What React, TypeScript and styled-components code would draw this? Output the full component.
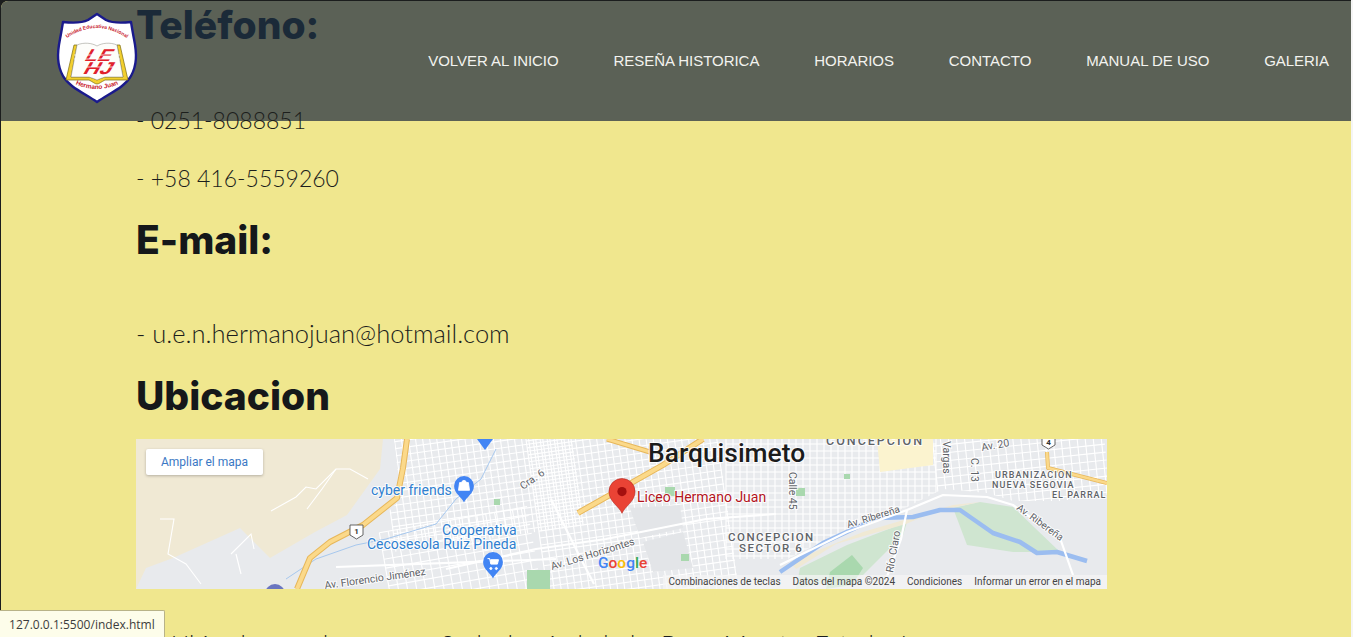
import React from "react";
import styled, { createGlobalStyle } from "styled-components";

const Global = createGlobalStyle`
  html, body { margin: 0; padding: 0; height: 100%; background: #f5f5f5; overflow: hidden; }
  #root { height: 100%; }
`;

const Frame = styled.div`
  width: 1351px;
  height: 637px;
  box-sizing: border-box;
  padding: 1px 0 0 1px;
  background: #1b1d1d;
  overflow: hidden;
`;

const Page = styled.div`
  height: 636px;
  display: grid;
  grid-template-columns: 100%;
  grid-template-rows: 120px 1fr;
  background: #f0e78e;
  border-top-left-radius: 7px;
  overflow: hidden;
`;

const Header = styled.header`
  grid-area: 1 / 1 / 2 / 2;
  display: flex;
  align-items: center;
  justify-content: space-between;
  background: #5b6156;
  padding: 0 22px 0 55px;
`;

const LogoBox = styled.div`
  display: flex;
  margin-top: -6px;
`;

const Nav = styled.nav`
  display: flex;
  gap: 54.8px;
`;

const NavLink = styled.a`
  font-family: "Liberation Sans", Arial, sans-serif;
  font-size: 15px;
  letter-spacing: -0.03px;
  color: #f3f3ef;
  white-space: nowrap;
  position: relative;
  top: -1px;
`;

const Content = styled.main`
  grid-area: 1 / 1 / 3 / 2;
  z-index: 1;
  pointer-events: none;
  padding: 0 243px 0 135px;
  min-width: 0;
`;

const Heading = styled.h2<{ $navy?: boolean; $gap: number }>`
  font-family: Inter, Lato, sans-serif;
  font-weight: 800;
  font-size: 39px;
  line-height: 48px;
  margin: 0 0 ${(p) => p.$gap}px;
  color: ${(p) => (p.$navy ? "#1b2a38" : "#15181a")};
`;

const Line = styled.p<{ $size: number; $after: number }>`
  font-family: Lato, "Open Sans", sans-serif;
  font-weight: 300;
  font-size: ${(p) => p.$size}px;
  line-height: 28px;
  margin: 0 0 ${(p) => p.$after}px;
  color: #1c1e1c;
  white-space: nowrap;
`;

const MapBox = styled.div`
  position: relative;
  width: 971px;
  height: 150px;
  overflow: hidden;
  background: #e8eaed;
  pointer-events: auto;
`;

const MapSvg = styled.svg`
  display: block;
  width: 971px;
  height: 150px;
`;

const ExpandButton = styled.button`
  position: absolute;
  left: 10px;
  top: 10px;
  width: 117px;
  height: 26px;
  padding: 0;
  border: 0;
  border-radius: 2px;
  background: #fff;
  box-shadow: 0 1px 3px rgba(0, 0, 0, 0.25);
  color: #3a78c4;
  font-family: Roboto, sans-serif;
  font-size: 12px;
`;

const Attribution = styled.div`
  position: absolute;
  right: 0;
  bottom: 0;
  height: 14px;
  display: flex;
  background: rgba(245, 245, 245, 0.72);
  font-family: Roboto, sans-serif;
  font-size: 10px;
  line-height: 14px;
  color: #444;
`;

const AttributionItem = styled.span`
  padding: 0 6px;
  white-space: nowrap;
`;

const CutLine = styled.p`
  font-family: Lato, "Open Sans", sans-serif;
  font-weight: 300;
  font-size: 25px;
  line-height: 28px;
  margin: 41px 0 0 35px;
  color: #1c1e1c;
  white-space: nowrap;
  word-spacing: 6px;
`;

const StatusBubble = styled.div`
  position: fixed;
  left: 0;
  bottom: 0;
  width: 165px;
  height: 27px;
  box-sizing: border-box;
  padding: 0 0 0 9px;
  background: #fdfdea;
  border-top: 1px solid #b8b388;
  border-right: 1px solid #b8b388;
  border-top-right-radius: 2px;
  z-index: 5;
  font-family: "Open Sans", "Liberation Sans", sans-serif;
  font-size: 12px;
  line-height: 27px;
  letter-spacing: 0.02px;
  color: #3c3c3c;
  white-space: nowrap;
`;

const Logo = () => (
  <svg width="82" height="92" viewBox="0 0 82 92" aria-label="Unidad Educativa Nacional Hermano Juan">
    <defs>
      <path id="arcTop" d="M7 29 Q40 3 75 29" fill="none" />
      <path id="arcBottom" d="M15 70 Q41 84 67 70" fill="none" />
      <clipPath id="lettersClip">
        <rect x="12" y="28" width="60" height="44" />
      </clipPath>
    </defs>
    <path
      d="M41 2 L50 8 C56 11 66 11 75 10 C76 16 77 22 78 27 C81 42 81 53 75 64 C69 75 54 81 41 90 C28 81 13 75 7 64 C1 53 1 42 4 27 C5 22 6 16 7 10 C16 11 26 11 32 8 Z"
      fill="#fff"
      stroke="#1a1a8c"
      strokeWidth="2.4"
      strokeLinejoin="round"
    />
    <text fontFamily="Liberation Sans, sans-serif" fontSize="5" fontWeight="700" fill="#c8202c">
      <textPath href="#arcTop" startOffset="50%" textAnchor="middle">Unidad Educativa Nacional</textPath>
    </text>
    <text fontFamily="Liberation Sans, sans-serif" fontSize="6.4" fontWeight="700" fill="#c8202c">
      <textPath href="#arcBottom" startOffset="50%" textAnchor="middle">Hermano Juan</textPath>
    </text>
    <path d="M18 33 L10 68 L33 68 C37 70 39 72 41 72 C43 72 45 70 49 68 L72 68 L64 33 L61 33 L67 65 L49 65 C46 66 43 67 41 68 C39 67 36 66 33 65 L15 65 L21 33 Z" fill="#f2cf2e" stroke="#7a6a10" strokeWidth="0.7" />
    <path d="M21 33 C28 30 36 31 41 34 C46 31 54 30 61 33 L67 65 L49 65 C46 66 43 67 41 68 C39 67 36 66 33 65 L15 65 Z" fill="#fdfdfa" stroke="#8a8a80" strokeWidth="0.5" />
    <g clipPath="url(#lettersClip)">
      <g transform="translate(41 50) skewX(-30)" fill="#e0202c" fontFamily="Liberation Sans, sans-serif" fontWeight="700" textAnchor="middle">
        <text x="-1" y="-1" fontSize="17" textLength="26" lengthAdjust="spacingAndGlyphs">LE</text>
        <text x="6" y="12" fontSize="17" textLength="28" lengthAdjust="spacingAndGlyphs">HJ</text>
      </g>
      <g stroke="#fdfdfa" strokeWidth="0.8">
        <line x1="18" x2="64" y1="43" y2="43" />
        <line x1="18" x2="64" y1="47" y2="47" />
        <line x1="18" x2="64" y1="55" y2="55" />
      </g>
    </g>
  </svg>
);

const streets = (x: number, y: number, w: number, h: number, step: number, rot: number) => {
  const rows: React.ReactElement[] = [];
  for (let i = 0; i <= h; i += step) rows.push(<line key={`h${i}`} x1={x} x2={x + w} y1={y + i} y2={y + i} />);
  for (let i = 0; i <= w; i += step) rows.push(<line key={`v${i}`} x1={x + i} x2={x + i} y1={y} y2={y + h} />);
  return (
    <g transform={`rotate(${rot} ${x + w / 2} ${y + h / 2})`} stroke="#fff" strokeWidth="1.1">
      {rows}
    </g>
  );
};

const Pin = ({ x, y, color, s = 1, glyph }: { x: number; y: number; color: string; s?: number; glyph?: React.ReactNode }) => (
  <g transform={`translate(${x} ${y}) scale(${s})`}>
    <path d="M0 14 C-2 9 -9 6 -9 -1 A9 9 0 1 1 9 -1 C9 6 2 9 0 14 Z" fill={color} />
    {glyph}
  </g>
);

const MapLabel = styled.text<{ $c?: string; $s?: number; $w?: number; $ls?: number }>`
  font-family: Roboto, sans-serif;
  font-size: ${(p) => p.$s ?? 10}px;
  font-weight: ${(p) => p.$w ?? 400};
  letter-spacing: ${(p) => p.$ls ?? 0}px;
  fill: ${(p) => p.$c ?? "#5f6368"};
  paint-order: stroke;
  stroke: rgba(255, 255, 255, 0.85);
  stroke-width: 2px;
`;

const HWY = "M161 150 L174 119 L194 103 L227 86 L261 59 L267 29 L271 0";

const MapDrawing = () => (
  <MapSvg viewBox="0 0 971 150">
    <rect width="971" height="150" fill="#e8eaed" />
    <path d="M0 0 H247 L244 30 L211 76 L179 93 L134 119 L104 89 L37 119 L10 129 L0 150 Z" fill="#f0e9d4" />
    <clipPath id="cityA"><path d="M258 0 H971 V56 L924 62 L877 62 L851 54 L807 50 L771 68 L711 90 L644 124 L610 150 H195 L235 90 L265 60 Z" /></clipPath>
    <g clipPath="url(#cityA)">
      {streets(250, -30, 190, 130, 7, -8)}
      {streets(400, -40, 190, 210, 7, -8)}
      {streets(590, -30, 210, 150, 7, 0)}
      {streets(800, -10, 171, 80, 8, -6)}
      {streets(250, 80, 150, 90, 9, -10)}
    </g>
    <path d="M494 69 L544 66 L547 89 L504 99 Z M507 103 L547 93 L557 129 L517 133 Z" fill="#e3e5e8" />
    <path d="M741 0 H797 V26 L744 33 Z" fill="#fbf3cf" />
    <path d="M817 69 L844 63 L877 68 L924 113 L877 113 L831 106 Z" fill="#cfe5d0" />
    <path d="M664 129 L711 106 L771 83 L767 96 L727 136 L660 150 Z" fill="#cfe5d0" />
    <path d="M654 123 L727 93 L771 80 L817 66 L844 63 L800 72 L770 85 L700 105 L660 130 Z" fill="#f0e9d4" />
    <path d="M694 133 L716 116 L727 129 L716 146 L690 150 Z" fill="#a9d8ae" />
    <path d="M391 131 H414 V150 H391 Z" fill="#a9d8ae" />
    <path d="M529 48 h10 v9 h-10 Z M660 49 h9 v8 h-9 Z M708 35 h6 v5 h-6 Z M358 60 h6 v6 h-6 Z M517 57 h8 v6 h-8 Z M545 115 h8 v7 h-8 Z" fill="#a9d8ae" />
    <g stroke="#fff" strokeWidth="1.1" fill="none">
      <path d="M135 72 L160 58 L170 48 L180 50 L200 30 L214 30 L232 40" />
      <path d="M171 70 L186 50 L200 30" />
      <path d="M24 80 L38 80 L32 115 L50 125 L65 145" />
      <path d="M95 115 L115 95 L118 110" />
      <path d="M105 135 L100 115" />
    </g>
    <path d="M150 140 L180 120 L220 106 L250 100 L300 85 L320 60 L345 40 L360 10" stroke="#a7c8ee" strokeWidth="1" fill="none" />
    <path d="M644 133 L687 104 L741 79 L777 78 L804 71 L824 71 L857 94 L884 103 L901 114 L921 113 L951 122" stroke="#9bbdf0" strokeWidth="4.5" fill="none" strokeLinejoin="round" />
    <g stroke="#fff" strokeWidth="2.2" fill="none" strokeLinejoin="round">
      <path d="M644 126 L711 93 L771 71 L807 56 L851 58 L877 66 L924 99 L937 136" />
      <path d="M310 130 L400 110 L470 100 L570 80 L640 75" />
      <path d="M415 60 L445 120 L458 145" />
      <path d="M200 128 L420 120" />
      <path d="M771 71 L765 100 L752 135 L745 150" />
    </g>
    <g fill="none" strokeLinejoin="round">
      <path d={HWY} stroke="#e7b75a" strokeWidth="6" />
      <path d={HWY} stroke="#fbd98a" strokeWidth="4" />
      <path d="M442 74 L527 26 L567 0" stroke="#e7b75a" strokeWidth="6" />
      <path d="M442 74 L527 26 L567 0" stroke="#fbd98a" strokeWidth="4" />
      <path d="M471 0 L514 13" stroke="#e7b75a" strokeWidth="5" />
      <path d="M471 0 L514 13" stroke="#fbd98a" strokeWidth="3" />
      <path d="M911 13 L912 29 L971 44" stroke="#e7b75a" strokeWidth="4" />
      <path d="M911 13 L912 29 L971 44" stroke="#fbd98a" strokeWidth="2.6" />
    </g>
    <path d="M214 86 h13 v10 l-6.5 4 l-6.5 -4 Z" fill="#fff" stroke="#555" strokeWidth="0.9" />
    <text x="220.5" y="95" fontFamily="Roboto, sans-serif" fontSize="8" fontWeight="700" textAnchor="middle" fill="#333">1</text>
    <path d="M906 -4 h13 v10 l-6.5 4 l-6.5 -4 Z" fill="#fff" stroke="#555" strokeWidth="0.9" />
    <text x="912.5" y="6" fontFamily="Roboto, sans-serif" fontSize="8" fontWeight="700" textAnchor="middle" fill="#333">4</text>
    <MapLabel x="235" y="56" $c="#2f7fd0" $s={14}>cyber friends</MapLabel>
    <MapLabel x="306" y="96" $c="#2f7fd0" $s={14}>Cooperativa</MapLabel>
    <MapLabel x="231" y="110" $c="#2f7fd0" $s={14}>Cecosesola Ruiz Pineda</MapLabel>
    <MapLabel x="512" y="23" $c="#1c1c1c" $s={26.4} $w={500}>Barquisimeto</MapLabel>
    <MapLabel x="501" y="63" $c="#b3141d" $s={14}>Liceo Hermano Juan</MapLabel>
    <MapLabel x="690" y="6" $s={12.5} $w={500} $ls={2}>CONCEPCION</MapLabel>
    <MapLabel x="592" y="102" $s={11.5} $w={500} $ls={1.5}>CONCEPCION</MapLabel>
    <MapLabel x="603" y="113" $s={11.5} $w={500} $ls={1.5}>SECTOR 6</MapLabel>
    <MapLabel x="859" y="39" $s={9} $w={500} $ls={1.1}>URBANIZACION</MapLabel>
    <MapLabel x="856" y="49" $s={9} $w={500} $ls={1.1}>NUEVA SEGOVIA</MapLabel>
    <MapLabel x="916" y="59" $s={9} $w={500} $ls={1}>EL PARRAL</MapLabel>
    <MapLabel transform="translate(846 12) rotate(-10)" $s={10.5}>Av. 20</MapLabel>
    <MapLabel transform="translate(387 51) rotate(-35)" $s={10.5}>Cra. 6</MapLabel>
    <MapLabel transform="translate(189 150) rotate(-8)" $s={10.5}>Av. Florencio Jiménez</MapLabel>
    <MapLabel transform="translate(416 131) rotate(-17)" $s={10.5}>Av. Los Horizontes</MapLabel>
    <MapLabel transform="translate(712 89) rotate(-17)" $s={10}>Av. Ribereña</MapLabel>
    <MapLabel transform="translate(880 70) rotate(36)" $s={10}>Av. Ribereña</MapLabel>
    <MapLabel transform="translate(653 33) rotate(90)" $s={10.5}>Calle 45</MapLabel>
    <MapLabel transform="translate(807 2) rotate(90)" $s={10.5}>Vargas</MapLabel>
    <MapLabel transform="translate(835 19) rotate(90)" $s={10.5}>C. 13</MapLabel>
    <MapLabel transform="translate(757 134) rotate(-80)" $s={10.5}>Río Claro</MapLabel>
    <Pin x={328} y={48} color="#4285f4" s={1.1} glyph={<path d="M-4 -4 h8 l1 7 h-10 Z M-2 -4 a2 2 0 0 1 4 0" fill="#fff" stroke="#fff" strokeWidth="0.8" />} />
    <Pin x={357} y={124} color="#4285f4" s={1.1} glyph={<path d="M-5 -4 h2 l1 5 h6 l1 -4 h-7 M-2 4 a1 1 0 1 0 0.1 0 M3 4 a1 1 0 1 0 0.1 0" fill="#fff" stroke="#fff" strokeWidth="0.9" />} />
    <path d="M341 0 H357 L349 11 Z" fill="#4285f4" />
    <circle cx="139" cy="155" r="10" fill="#6a76c0" />
    <g transform="translate(486 54) scale(1.45)">
      <path d="M0 14 C-2 9 -9 6 -9 -1 A9 9 0 1 1 9 -1 C9 6 2 9 0 14 Z" fill="#ea4335" stroke="#b3261e" strokeWidth="0.4" />
      <circle cx="0" cy="-1" r="3.2" fill="#a5100f" />
    </g>
    <text x="462" y="129" fontFamily="Roboto, sans-serif" fontSize="15.5" fontWeight="500">
      <tspan fill="#4285f4">G</tspan><tspan fill="#ea4335">o</tspan><tspan fill="#fbbc05">o</tspan><tspan fill="#4285f4">g</tspan><tspan fill="#34a853">l</tspan><tspan fill="#ea4335">e</tspan>
    </text>
  </MapSvg>
);

export default function App() {
  return (
    <>
      <Global />
      <Frame>
        <Page>
          <Header>
            <LogoBox>
              <Logo />
            </LogoBox>
            <Nav>
              <NavLink>VOLVER AL INICIO</NavLink>
              <NavLink>RESEÑA HISTORICA</NavLink>
              <NavLink>HORARIOS</NavLink>
              <NavLink>CONTACTO</NavLink>
              <NavLink>MANUAL DE USO</NavLink>
              <NavLink>GALERIA</NavLink>
            </Nav>
          </Header>
          <Content>
            <Heading $navy $gap={57}>Teléfono:</Heading>
            <Line $size={23} $after={30}>- 0251-8088851</Line>
            <Line $size={23} $after={24}>- +58 416-5559260</Line>
            <Heading $gap={55}>E-mail:</Heading>
            <Line $size={25.5} $after={25}>- u.e.n.hermanojuan@hotmail.com</Line>
            <Heading $gap={19}>Ubicacion</Heading>
            <MapBox>
              <MapDrawing />
              <ExpandButton>Ampliar el mapa</ExpandButton>
              <Attribution>
                <AttributionItem>Combinaciones de teclas</AttributionItem>
                <AttributionItem>Datos del mapa ©2024</AttributionItem>
                <AttributionItem>Condiciones</AttributionItem>
                <AttributionItem>Informar un error en el mapa</AttributionItem>
              </Attribution>
            </MapBox>
            <CutLine>Ubicados en la carrera 8 de la ciudad de Barquisimeto Estado Lara</CutLine>
          </Content>
        </Page>
        <StatusBubble>127.0.0.1:5500/index.html</StatusBubble>
      </Frame>
    </>
  );
}
